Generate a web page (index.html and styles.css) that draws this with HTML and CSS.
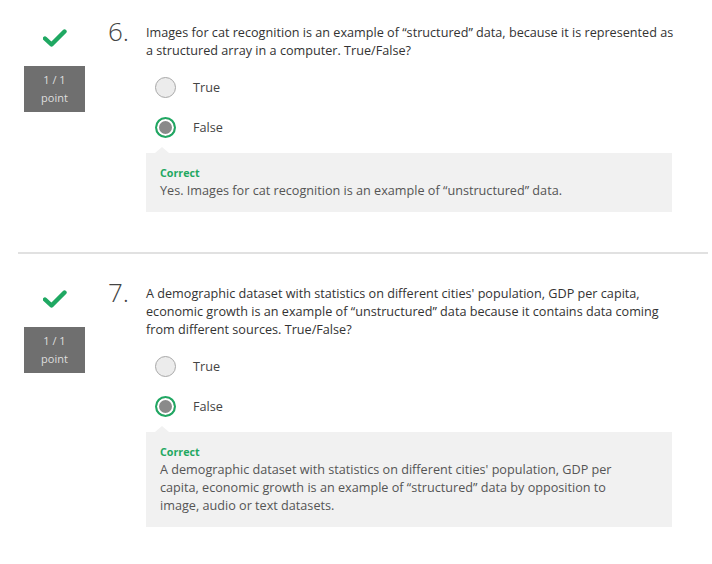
FILE: index.html
```html
<!DOCTYPE html>
<html>
<head>
<meta charset="utf-8">
<link rel="stylesheet" href="styles.css">
</head>
<body>
<div class="quiz">
  <div class="question">
    <div class="side">
      <svg class="check" width="24" height="18" viewBox="0 0 24 18"><path d="M2 9.5 L8.5 15.5 L21.5 2.5" fill="none" stroke="#1fa862" stroke-width="4.4" stroke-linecap="round" stroke-linejoin="round"/></svg>
      <div class="badge">1 / 1<br>point</div>
    </div>
    <div class="num">6.</div>
    <div class="body">
      <p class="prompt">Images for cat recognition is an example of “structured” data, because it is represented as a structured array in a computer. True/False?</p>
      <div class="options">
        <div class="opt"><span class="radio"></span><span>True</span></div>
        <div class="opt"><span class="radio on"></span><span>False</span></div>
      </div>
      <div class="feedback">
        <div class="fb-title">Correct</div>
        <div class="fb-text">Yes. Images for cat recognition is an example of “unstructured” data.</div>
      </div>
    </div>
  </div>
  <div class="question">
    <div class="side">
      <svg class="check" width="24" height="18" viewBox="0 0 24 18"><path d="M2 9.5 L8.5 15.5 L21.5 2.5" fill="none" stroke="#1fa862" stroke-width="4.4" stroke-linecap="round" stroke-linejoin="round"/></svg>
      <div class="badge">1 / 1<br>point</div>
    </div>
    <div class="num">7.</div>
    <div class="body">
      <p class="prompt">A demographic dataset with statistics on different cities' population, GDP per capita, economic growth is an example of “unstructured” data because it contains data coming from different sources. True/False?</p>
      <div class="options">
        <div class="opt"><span class="radio"></span><span>True</span></div>
        <div class="opt"><span class="radio on"></span><span>False</span></div>
      </div>
      <div class="feedback">
        <div class="fb-title">Correct</div>
        <div class="fb-text">A demographic dataset with statistics on different cities' population, GDP per capita, economic growth is an example of “structured” data by opposition to image, audio or text datasets.</div>
      </div>
    </div>
  </div>
</div>
</body>
</html>
```
FILE: styles.css
```css
html, body {
  margin: 0;
  padding: 0;
  background: #fff;
}
body {
  font-family: "Open Sans", "Liberation Sans", sans-serif;
  color: #333;
}
.quiz {
  margin-left: 18px;
  width: 690px;
}
.question {
  display: grid;
  grid-template-columns: 6px 61px 23px 38px 526px;
  grid-template-areas: "pad side gap num body";
  padding: 30px 0 40px;
}
.question:first-child {
  padding-top: 23px;
}
.question + .question {
  border-top: 2px solid #e1e1e1;
}
.side {
  grid-area: side;
  display: flex;
  flex-direction: column;
  align-items: center;
}
.check {
  margin-top: 6px;
  display: block;
}
.badge {
  margin-top: 19px;
  width: 61px;
  height: 46px;
  background: #6f6f6f;
  color: #dedede;
  font-size: 11px;
  line-height: 18px;
  text-align: center;
  box-sizing: border-box;
  padding-top: 5px;
}
.num {
  grid-area: num;
  font-size: 26px;
  font-weight: 300;
  line-height: 26px;
  color: #444;
  margin-top: -5px;
}
.body {
  grid-area: body;
}
.prompt {
  margin: 0 -8px 0 0;
  font-size: 12.65px;
  line-height: 18px;
  color: #333;
}
.options {
  margin-top: 8px;
}
.opt {
  height: 40px;
  display: flex;
  align-items: center;
  font-size: 12.65px;
  color: #444;
}
.radio {
  width: 21px;
  height: 21px;
  box-sizing: border-box;
  border-radius: 50%;
  border: 1px solid #a8a8a8;
  background: #ececec;
  margin-left: 9px;
  margin-right: 17px;
}
.radio.on {
  border: 2px solid #1fa862;
  background: #8a8a8a;
  box-shadow: inset 0 0 0 2px #fff;
}
.feedback {
  position: relative;
  margin-top: 6px;
  background: #f1f1f1;
  padding: 12px 14px 13px;
}
.feedback::before {
  content: "";
  position: absolute;
  left: 9px;
  top: -6px;
  border-left: 7px solid transparent;
  border-right: 7px solid transparent;
  border-bottom: 6px solid #f1f1f1;
}
.fb-title {
  font-size: 10.7px;
  font-weight: 700;
  line-height: 16px;
  color: #1fa862;
}
.fb-text {
  max-width: 470px;
  font-size: 12.65px;
  line-height: 18px;
  color: #555;
}
```
